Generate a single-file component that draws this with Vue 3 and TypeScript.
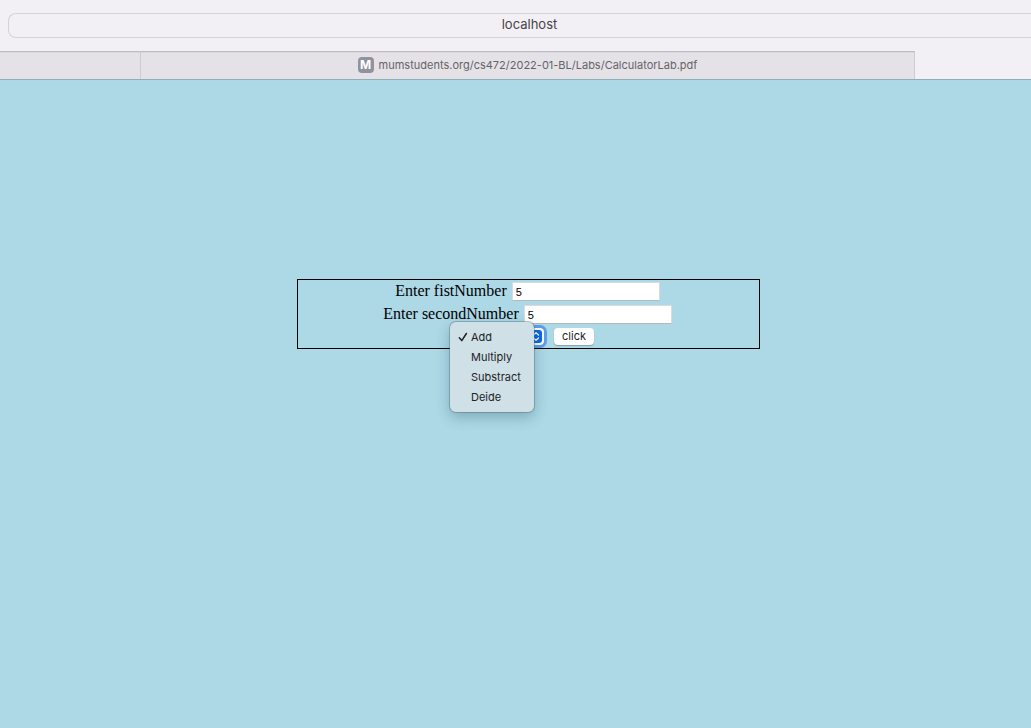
<script setup lang="ts">
import { ref } from 'vue'

const operations: string[] = ['Add', 'Multiply', 'Substract', 'Deide']
const firstNumber = ref('5')
const secondNumber = ref('5')
const operation = ref('Add')
</script>

<template>
  <div class="window">
    <header class="toolbar">
      <div class="address">localhost</div>
    </header>
    <nav class="tabs" aria-label="Tabs">
      <a class="tab tab-first" href="#" aria-label="Previous tab"></a>
      <a class="tab tab-pdf" href="#">
        <span class="site-icon">M</span>
        <span>mumstudents.org/cs472/2022-01-BL/Labs/CalculatorLab.pdf</span>
      </a>
      <div class="tab-current"></div>
    </nav>
    <main class="page">
      <form class="calculator" @submit.prevent>
        <div class="row">
          <label for="first">Enter fistNumber</label>
          <input id="first" v-model="firstNumber" type="text" />
        </div>
        <div class="row">
          <label for="second">Enter secondNumber</label>
          <input id="second" v-model="secondNumber" type="text" />
        </div>
        <div class="row actions">
          <div class="picker">
            <select v-model="operation" aria-label="Operation">
              <option v-for="name in operations" :key="name">{{ name }}</option>
            </select>
            <svg class="arrows" viewBox="0 0 12 13" aria-hidden="true">
              <rect width="12" height="13" rx="3" fill="#0a6ae6" />
              <path d="M3.500 5 6 2.700 8.500 5M3.500 8 6 10.300 8.500 8" fill="none" stroke="#fff" stroke-width="1.300" stroke-linecap="round" stroke-linejoin="round" />
            </svg>
            <div class="menu" role="listbox" aria-label="Operations">
              <button
                v-for="name in operations"
                :key="name"
                class="choice"
                type="button"
                role="option"
                :aria-selected="name === operation"
                @click="operation = name"
              >
                <span class="mark">
                  <svg v-if="name === operation" viewBox="0 0 10 10" aria-hidden="true">
                    <path d="M1.300 5.800 3.800 8.600 8.400 1.500" fill="none" stroke="#1d2326" stroke-width="1.500" stroke-linecap="round" stroke-linejoin="round" />
                  </svg>
                </span>
                {{ name }}
              </button>
            </div>
          </div>
          <button class="submit" type="submit">click</button>
        </div>
      </form>
    </main>
  </div>
</template>

<style>
body {
  margin: 0;
  background: #add8e6;
}
</style>

<style scoped>
.window {
  display: flex;
  flex-direction: column;
  min-height: 100vh;
  overflow: hidden;
  background: #add8e6;
  font-family: Inter, "Liberation Sans", sans-serif;
}
.toolbar {
  height: 51px;
  box-sizing: border-box;
  padding: 13px 0 0 8px;
  background: #f3f0f5;
}
.address {
  height: 25px;
  box-sizing: border-box;
  padding: 0 1px 0 20px;
  border: 1px solid #d5d2d7;
  border-right: 0;
  border-radius: 8px 0 0 8px;
  color: #454347;
  font-size: 13px;
  line-height: 20px;
  text-align: center;
}
.tabs {
  display: flex;
  height: 29px;
  box-sizing: border-box;
  border-bottom: 1px solid #8daeba;
  background: #f3f0f5;
}
.tab {
  display: flex;
  align-items: center;
  justify-content: center;
  gap: 5px;
  box-sizing: border-box;
  padding-bottom: 1px;
  border-top: 1px solid #bfbcc1;
  border-right: 1px solid #cfccd1;
  background: #e5e2e7;
  box-shadow: inset 0 1px 0 #dad7dc;
  color: #656267;
  font-size: 11px;
  text-decoration: none;
  white-space: nowrap;
}
.tab-first {
  width: 141px;
}
.tab-pdf {
  flex: 1;
}
.tab-current {
  width: 116px;
}
.site-icon {
  width: 16px;
  height: 16px;
  border-radius: 4px;
  background: #92929c;
  color: #fff;
  font-size: 12px;
  font-weight: 700;
  line-height: 16px;
  text-align: center;
}
.page {
  flex: 1;
  padding: 199px 0 0 26px;
}
.calculator {
  width: 46%;
  box-sizing: border-box;
  margin: 0 auto;
  padding-bottom: 2px;
  border: 1px solid #000;
  color: #000;
}
.row {
  display: flex;
  align-items: center;
  justify-content: center;
  height: 23px;
  gap: 5px;
  padding-right: 2px;
}
.row label {
  padding-bottom: 2px;
  font: 16px/21px "Liberation Serif", serif;
}
.row input {
  width: 148px;
  height: 19px;
  box-sizing: border-box;
  padding: 1px 3px;
  border: 1px solid #d8dcdf;
  border-bottom-color: #b5b9bc;
  background: #fff;
  color: #000;
  font: 11px "Liberation Sans", sans-serif;
  outline: none;
}
.row.actions {
  gap: 10px;
  height: 20px;
  padding: 0;
}
.picker {
  position: relative;
  display: flex;
}
select {
  width: 81px;
  height: 17px;
  padding: 0 20px 0 8px;
  border: 0;
  border-radius: 4px;
  outline: 3px solid #5f9fea;
  background: #fff;
  color: #000;
  font: 11px Inter, sans-serif;
  appearance: none;
}
.arrows {
  position: absolute;
  top: 2px;
  right: 2px;
  width: 12px;
  height: 13px;
  pointer-events: none;
}
.menu {
  position: absolute;
  z-index: 1;
  top: -6px;
  left: -13px;
  width: 84px;
  box-sizing: border-box;
  padding: 5px 0;
  border-radius: 6px;
  background: #cfe0e7;
  box-shadow: 0 0 0 1px rgba(70, 95, 105, 0.35), 0 5px 14px rgba(20, 60, 80, 0.3);
}
.choice {
  display: flex;
  align-items: center;
  width: 100%;
  height: 20px;
  padding: 0 0 0 8px;
  border: 0;
  background: none;
  color: #1d2326;
  font: 11px Inter, sans-serif;
}
.mark {
  width: 13px;
  height: 10px;
  flex: none;
}
.mark svg {
  display: block;
  width: 10px;
  height: 10px;
}
.submit {
  width: 40px;
  height: 17px;
  padding: 0;
  border: 0;
  border-radius: 4px;
  background: #fff;
  box-shadow: 0 1px 1px rgba(0, 0, 0, 0.25);
  color: #1d1d1d;
  font: 11px/17px Inter, sans-serif;
}
</style>
